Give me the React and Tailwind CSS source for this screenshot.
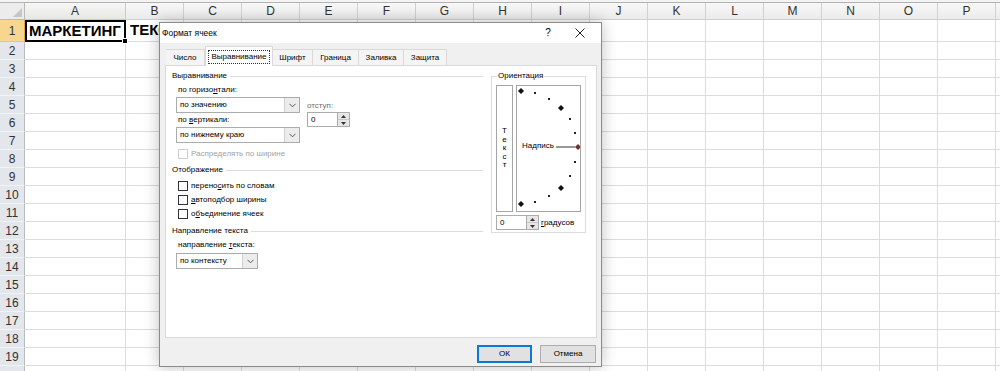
import React from "react";

const COLS = ["B", "C", "D", "E", "F", "G", "H", "I", "J", "K", "L", "M", "N", "O", "P", ""];
const ROWS = Array.from({ length: 20 }, (_, i) => i + 1);

const TABS = [
  { label: "Число", w: "w-[39px]" },
  { label: "Выравнивание", w: "w-[68px]", active: true },
  { label: "Шрифт", w: "w-[40px]" },
  { label: "Граница", w: "w-[46px]" },
  { label: "Заливка", w: "w-[45px]" },
  { label: "Защита", w: "w-[43px]" },
];

function Chevron() {
  return (
    <svg width="7" height="5" viewBox="0 0 7 5" fill="none">
      <path d="M0.5 0.8L3.5 3.8L6.5 0.8" stroke="#555" strokeWidth="1" />
    </svg>
  );
}

function Select({ value, w }) {
  return (
    <div className={`${w} h-[16px] flex border border-[#acacac] bg-white`}>
      <div className="flex-1 flex items-center pl-[3px] leading-none">{value}</div>
      <div className="w-[15px] flex items-center justify-center border-l border-[#d0d0d0] bg-[#ececec]">
        <Chevron />
      </div>
    </div>
  );
}

function Spin({ value, w }) {
  return (
    <div className="flex h-[15px]">
      <div className={`${w} flex items-center pl-[3px] border border-[#acacac] bg-white leading-none`}>
        {value}
      </div>
      <div className="w-[12px] flex flex-col border border-l-0 border-[#acacac] bg-[#e6e6e6]">
        <div className="flex-1 flex items-center justify-center border-b border-[#c8c8c8]">
          <svg width="5" height="3" viewBox="0 0 5 3"><path d="M0 3L2.5 0L5 3Z" fill="#333" /></svg>
        </div>
        <div className="flex-1 flex items-center justify-center">
          <svg width="5" height="3" viewBox="0 0 5 3"><path d="M0 0L2.5 3L5 0Z" fill="#333" /></svg>
        </div>
      </div>
    </div>
  );
}

function Section({ title }) {
  return (
    <div className="h-[12px] flex items-center gap-[3px]">
      <span className="leading-none">{title}</span>
      <div className="flex-1 h-px bg-[#dcdcdc]" />
    </div>
  );
}

function Check({ children, disabled }) {
  return (
    <div className={`h-[14px] flex items-center gap-[3px] ${disabled ? "text-[#a3a3a3]" : ""}`}>
      <div
        className={`w-[10px] h-[10px] bg-white border ${disabled ? "border-[#cfcfcf]" : "border-[#333]"}`}
      />
      <span className="leading-none">{children}</span>
    </div>
  );
}

function Dial() {
  const big = [
    [4, 5],
    [44, 22],
    [44, 102],
    [4, 118],
  ];
  const small = [
    [18, 7],
    [32, 13],
    [53, 33],
    [58, 47],
    [58, 76],
    [53, 90],
    [32, 110],
    [18, 116],
  ];
  return (
    <div className="relative w-[65px] h-[127px] border border-[#a5a5a5] bg-white">
      <svg className="absolute inset-0" width="63" height="125" viewBox="0 0 63 125">
        {big.map(([x, y], i) => (
          <path key={i} d={`M${x} ${y - 3}L${x + 3} ${y}L${x} ${y + 3}L${x - 3} ${y}Z`} fill="#111" />
        ))}
        {small.map(([x, y], i) => (
          <rect key={i} x={x - 1} y={y - 1} width="2" height="2" fill="#222" />
        ))}
        <line x1="39" y1="61" x2="58" y2="61" stroke="#333" strokeWidth="1" />
        <path d="M61 58L64 61L61 64L58 61Z" fill="#7a2a2a" />
      </svg>
      <span className="absolute left-[5px] top-[56px] leading-none">Надпись</span>
    </div>
  );
}

function Dialog() {
  return (
    <div className="absolute left-[159px] top-[22px] w-[443px] h-[345px] flex flex-col border border-[#8a8a8a] bg-[#f0f0f0] shadow-[0_0_14px_rgba(0,0,0,0.25)] text-[8px] text-black font-['Liberation_Sans',sans-serif] z-10">
      {/* title bar */}
      <div className="h-[20px] flex items-center bg-white">
        <span className="pl-[2px] text-[8.5px] leading-none">Формат ячеек</span>
        <div className="flex-1" />
        <span className="w-[20px] text-center text-[10px] leading-none">?</span>
        <div className="w-[20px] ml-[12px] mr-[11px] flex justify-center">
          <svg width="10" height="10" viewBox="0 0 10 10">
            <path d="M0.5 0.5L9.5 9.5M9.5 0.5L0.5 9.5" stroke="#222" strokeWidth="1" />
          </svg>
        </div>
      </div>

      {/* tabs */}
      <div className="flex items-end pl-[6px] pt-[3px] h-[23px] -mb-px relative z-10">
        {TABS.map((t) =>
          t.active ? (
            <div
              key={t.label}
              className={`${t.w} h-[20px] flex items-center justify-center bg-white border border-b-0 border-[#d9d9d9]`}
            >
              <span className="px-[2px] py-[2px] border border-dotted border-[#333] leading-none">{t.label}</span>
            </div>
          ) : (
            <div
              key={t.label}
              className={`${t.w} h-[17px] flex items-center justify-center bg-[#f4f4f4] border border-l-0 border-[#d9d9d9] leading-none`}
            >
              {t.label}
            </div>
          )
        )}
      </div>

      {/* panel */}
      <div className="ml-[5px] w-[432px] h-[273px] flex border border-[#d9d9d9] bg-white">
        <div className="w-[317px] pl-[6px] pt-[4px]">
          <Section title="Выравнивание" />
          <div className="ml-[4px] mt-[2px] flex">
            <div className="w-[124px]">
              <div className="h-[12px] flex items-center pl-[2px] leading-none">
                <span>по горизо<u>н</u>тали:</span>
              </div>
              <div className="mt-px">
                <Select value="по значению" w="w-[124px]" />
              </div>
              <div className="h-[14px] flex items-center pl-[2px] leading-none">
                <span>по <u>в</u>ертикали:</span>
              </div>
              <Select value="по нижнему краю" w="w-[124px]" />
            </div>
            <div className="ml-[7px] pt-[15px]">
              <div className="h-[13px] flex items-center text-[#6d6d6d] leading-none">отступ:</div>
              <Spin value="0" w="w-[31px]" />
            </div>
          </div>
          <div className="ml-[6px] mt-[4px]">
            <Check disabled>Распределять по ширине</Check>
          </div>
          <div className="mt-[3px]">
            <Section title="Отображение" />
          </div>
          <div className="ml-[6px] mt-[3px]">
            <Check>
              перено<u>с</u>ить по словам
            </Check>
            <Check>
              <u>а</u>втоподбор ширины
            </Check>
            <Check>
              о<u>б</u>ъединение ячеек
            </Check>
          </div>
          <div className="mt-[4px]">
            <Section title="Направление текста" />
          </div>
          <div className="ml-[4px] mt-[2px]">
            <div className="h-[12px] flex items-center pl-[2px] leading-none">
              <span>
                направление <u>т</u>екста:
              </span>
            </div>
            <div className="mt-[2px]">
              <Select value="по контексту" w="w-[82px]" />
            </div>
          </div>
        </div>

        <fieldset className="ml-[8px] mt-[4px] w-[92px] h-[163px] border border-[#dcdcdc] px-[4px] pt-[3px]">
          <legend className="ml-[1px] px-[1px] leading-[12px]">Ориентация</legend>
          <div className="flex gap-[3px]">
            <div className="w-[17px] h-[127px] flex flex-col items-center justify-center border border-[#a5a5a5] bg-white leading-[8.5px]">
              {"Текст".split("").map((c, i) => (
                <span key={i}>{c}</span>
              ))}
            </div>
            <Dial />
          </div>
          <div className="mt-[3px] flex items-center gap-[2px]">
            <Spin value="0" w="w-[31px]" />
            <span className="leading-none">
              <u>г</u>радусов
            </span>
          </div>
        </fieldset>
      </div>

      {/* buttons */}
      <div className="mt-[7px] flex justify-end gap-[8px] pr-[5px]">
        <button className="w-[55px] h-[18px] border-2 border-[#0a78d4] bg-[#e1e1e1] leading-none text-[8px]">
          ОК
        </button>
        <button className="w-[56px] h-[18px] border border-[#adadad] bg-[#e1e1e1] leading-none text-[8px]">
          Отмена
        </button>
      </div>
    </div>
  );
}

function Sheet() {
  return (
    <div className="font-['Liberation_Sans',sans-serif] text-[#333]">
      <div className="h-[2px] bg-[#f4f4f4]" />
      {/* column headers */}
      <div className="flex h-[18px] border-t border-[#b3b3b3]">
        <div className="w-[25px] shrink-0 flex items-end justify-end pr-[2px] pb-[2px] bg-[#ececec] border-r border-b border-[#b9b9b9]">
          <svg width="9" height="9" viewBox="0 0 9 9">
            <path d="M9 0V9H0Z" fill="#c6c6c6" />
          </svg>
        </div>
        <div className="w-[101px] shrink-0 flex items-center justify-center text-[12px] bg-gradient-to-b from-[#f7f7f5] to-[#e7e7e4] border-r border-b border-[#c9c9c9]">
          A
        </div>
        {COLS.map((c, i) => (
          <div
            key={i}
            className="w-[58px] shrink-0 flex items-center justify-center text-[12px] bg-gradient-to-b from-[#f8f8f8] to-[#ebebeb] border-r border-b border-[#d0d0d0]"
          >
            {c}
          </div>
        ))}
      </div>
      {ROWS.map((r) => (
        <div key={r} className={`flex ${r === 1 ? "h-[22px]" : "h-[18px]"}`}>
          <div
            className={`w-[25px] shrink-0 flex items-center justify-center text-[12px] border-r border-b ${
              r === 1
                ? "bg-[#f7d690] border-r-[#e2a93c] border-b-[#e8c47c]"
                : "bg-[#e3e6ea] border-r-[#b7bbc0] border-b-[#f2f3f5]"
            }`}
          >
            {r < 20 ? r : null}
          </div>
          {r === 1 ? (
            <div className="relative w-[101px] shrink-0 flex items-center pl-[2px] border-2 border-black text-black text-[15px] font-bold whitespace-nowrap">
              МАРКЕТИНГ
              <div className="absolute -right-[4px] -bottom-[4px] w-[6px] h-[6px] bg-black border border-white" />
            </div>
          ) : (
            <div className="w-[101px] shrink-0 border-r border-b border-[#dadcdd]" />
          )}
          {COLS.map((c, i) => (
            <div key={i} className="w-[58px] shrink-0 flex items-center border-r border-b border-[#dadcdd]">
              {r === 1 && i === 0 ? (
                <div className="ml-[4px] w-[29px] overflow-hidden whitespace-nowrap text-black text-[15px] font-bold">
                  ТЕКСТ
                </div>
              ) : null}
            </div>
          ))}
        </div>
      ))}
    </div>
  );
}

export default function App() {
  return (
    <div className="relative w-[1000px] h-[371px] overflow-hidden bg-white">
      <Sheet />
      <Dialog />
    </div>
  );
}
